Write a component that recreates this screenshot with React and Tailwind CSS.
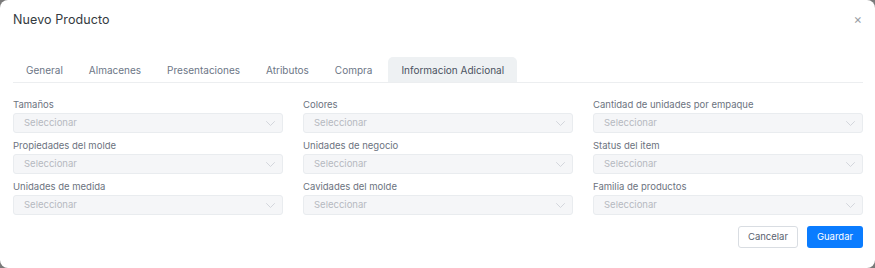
import React from 'react';

const fields = [
  "Tamaños",
  "Colores",
  "Cantidad de unidades por empaque",
  "Propiedades del molde",
  "Unidades de negocio",
  "Status del item",
  "Unidades de medida",
  "Cavidades del molde",
  "Familia de productos",
];

const tabs = ["General", "Almacenes", "Presentaciones", "Atributos", "Compra"];

function Chevron() {
  return (
    <svg width="9" height="5" viewBox="0 0 9 5" fill="none" className="text-[#cfd3d8]">
      <path d="M0.5 0.5l4 4 4-4" stroke="currentColor" strokeWidth="0.9" strokeLinecap="round" strokeLinejoin="round" />
    </svg>
  );
}

export default function App() {
  return (
    <div className="w-[875px] h-[268px] bg-[#7a7a7a]" style={{ fontFamily: "Inter, 'Noto Sans', sans-serif" }}>
      <div className="w-full h-full bg-white rounded-[8px] flex flex-col pl-[13px] pr-[12px]">
        {/* header */}
        <div className="flex items-center justify-between h-[40px] pt-[1px]">
          <h1 className="text-[12.5px] text-[#343a40] tracking-[0.1px]">Nuevo Producto</h1>
          <button className="text-[#9aa0a6] text-[13px] leading-none mr-[1px] -mt-[2px]">×</button>
        </div>

        {/* tabs */}
        <div className="mt-[17px] flex items-end border-b border-[#eceef0] h-[26px] text-[10px]">
          {tabs.map((t) => (
            <div key={t} className="px-[13px] h-full flex items-center pt-[1px] text-[#6c7686]">
              {t}
            </div>
          ))}
          <div className="ml-[3px] px-[13px] h-full flex items-center pt-[1px] bg-[#eef1f3] rounded-t-[5px] text-[#4a5160]">
            Informacion Adicional
          </div>
        </div>

        {/* fields */}
        <div className="grid grid-cols-3 gap-x-[20px] gap-y-[6px] mt-[15px]">
          {fields.map((f) => (
            <div key={f} className="flex flex-col">
              <label className="text-[9.5px] text-[#6c7380] leading-[13px] mb-[2px]">{f}</label>
              <div className="h-[20px] bg-[#f5f6f8] border border-[#e9ecef] rounded-[3px] flex items-center justify-between pl-[10px] pr-[7px]">
                <span className="text-[9.5px] text-[#b5b9c0]">Seleccionar</span>
                <Chevron />
              </div>
            </div>
          ))}
        </div>

        {/* footer */}
        <div className="flex justify-end gap-[9px] mt-[11px]">
          <button className="h-[22px] w-[60px] border border-[#d9dde2] rounded-[3px] text-[9.5px] text-[#5a6270] bg-white">
            Cancelar
          </button>
          <button className="h-[22px] w-[56px] rounded-[3px] text-[9.5px] text-white bg-[#0a7cff]">
            Guardar
          </button>
        </div>
      </div>
    </div>
  );
}
